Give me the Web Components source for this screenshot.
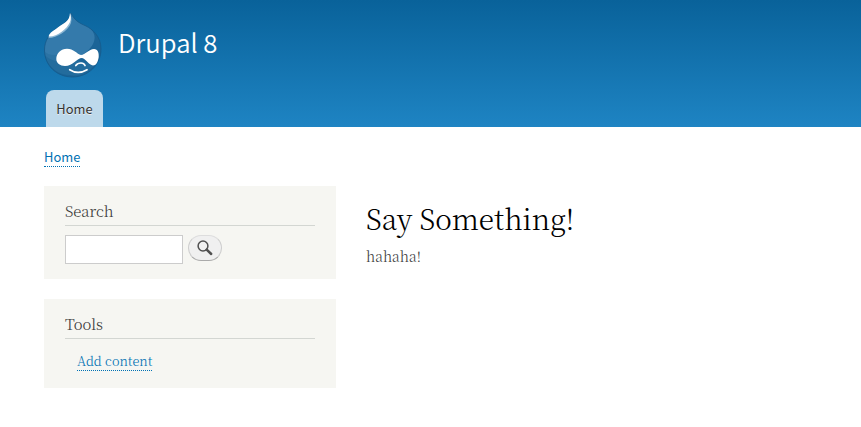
<!DOCTYPE html>
<html lang="en"><head><meta charset="utf-8"><title>Drupal 8</title>
<style>
html,body{margin:0;background:#fff;height:427px;overflow:hidden}
body{--sans:"Source Sans Pro","Noto Sans CJK SC",sans-serif;--serif:"Source Serif Pro","Noto Serif CJK SC","Liberation Serif",serif;font-family:var(--serif);color:#3b3b3b}
</style></head><body>
<drupal-page>
<site-header slot="header" name="Drupal 8"><nav-tab>Home</nav-tab></site-header>
<text-link class="crumb" slot="breadcrumb">Home</text-link>
<side-block slot="sidebar" heading="Search"><search-form></search-form></side-block>
<side-block slot="sidebar" class="tools" heading="Tools"><text-link>Add content</text-link></side-block>
<page-article slot="content" heading="Say Something!">hahaha!</page-article>
</drupal-page>
<script>
const define=(name,html)=>customElements.define(name,class extends HTMLElement{
 constructor(){super();this.attachShadow({mode:'open'}).innerHTML=html;}
 connectedCallback(){const t=this.shadowRoot.querySelector('[data-title]');if(t)t.textContent=this.getAttribute('heading')||this.getAttribute('name')||'';}
});
define('drupal-logo',`<style>:host{display:block;width:60px;height:68px}svg{display:block}</style>
<svg width="60" height="68" viewBox="0 0 60 68">
<defs><clipPath id="d"><path d="M28 1C27 9 19 12 13 17C6 22 1.500 29 1.500 38C1.500 54 14 65 29.500 65C45 65 58 53 58 37C58 24 49 17 43 14C36 11 31 8 28 1Z"/></clipPath></defs>
<g clip-path="url(#d)"><rect width="60" height="68" fill="#1b6497"/>
<path d="M28 0C38 9 48 14 51 22C55 34 38 47 23 49C13 51 5 47 1 42V10L28 0Z" fill="#347aab"/>
<path d="M1 39C8 46 16 42 25 41C37 53 47 52 54 47C49 60 37 65 26 63C11 62 3 51 1 39Z" fill="#28709f" opacity=".65"/></g>
<path d="M28 1C27 9 19 12 13 17C6 22 1.500 29 1.500 38C1.500 54 14 65 29.500 65C45 65 58 53 58 37C58 24 49 17 43 14C36 11 31 8 28 1Z" fill="none" stroke="#155b8b" stroke-width=".8"/>
<path d="M27 1C27 10 20 11 13 17C9 20 6 24 5.500 26C14 26 25 19 28 11C29 7 28 4 27 1Z" fill="#8bb7d4"/>
<path d="M27 1C27 10 20 11 13 17C9 19 6 22 5.500 24.500C14 25 24 17 27 10C28.200 7 28 4 27 1Z" fill="#fff"/>
<path d="M13.300 47C13.300 41 18 36.700 24 36.700C30.500 36.700 34 42 38 43C42 43 46 37 51 37C55 37 56 41 55.700 45C55 50 53 53.500 50 53.500C46 53 43 47 39 46C34 46 30 54 22 54C17 54 13.300 51 13.300 47Z" fill="#fff"/>
<path d="M32.800 53.500Q34.500 51 38 51Q41 51 42 53.500M26.700 57.700Q35 63 44 57.700" fill="none" stroke="#fff" stroke-width="1.700" stroke-linecap="round"/>
</svg>`);
define('nav-tab',`<style>:host{display:block;box-sizing:border-box;width:57px;height:37px;border-radius:8px 8px 0 0;background:#bdd9eb;color:#333;font:400 12.900px/38px var(--sans);text-align:center;text-shadow:0 1px #eee}</style><slot></slot>`);
define('site-header',`<style>:host{display:block;height:127px;background:linear-gradient(#09629a,#1e84c3)}header{padding:12px 0 0 43px}.brand{display:flex;height:78px}h1{margin:10px 0 0 15px;color:#fff;font:350 25.700px/40px var(--sans);white-space:nowrap}nav{display:flex;padding-left:3px}</style><header><div class="brand"><drupal-logo></drupal-logo><h1 data-title></h1></div><nav><slot></slot></nav></header>`);
define('text-link',`<style>:host{display:block;font-size:12.800px;line-height:18px}:host(.crumb){font:400 12.900px/18px var(--sans)}a{display:inline-block;color:#0071b3;border-bottom:1px dotted #0071b3}</style><a><slot></slot></a>`);
define('side-block',`<style>:host{display:block;box-sizing:border-box;width:292px;height:93px;padding:15px 21px 0;background:#f6f6f2}:host(.tools){height:89px}h2{box-sizing:border-box;height:25px;margin:0;border-bottom:1px solid #d3d6d2;font:300 14.900px/20px var(--serif)}.body{padding-top:9px}:host(.tools) .body{padding:13px 0 0 12px;font-weight:300}</style><h2 data-title></h2><div class="body"><slot></slot></div>`);
define('search-form',`<style>:host{display:flex;gap:5px}input{box-sizing:border-box;width:118px;height:29px;margin:0;padding:4px;border:1px solid #ccc;background:#fff;border-radius:0}button{box-sizing:border-box;width:34px;height:26px;padding:0;border:1px solid #ccc;border-top-color:#ddd;border-bottom-color:#aaa;border-radius:13px;background:#f0f0f0;display:flex;align-items:center;justify-content:center}svg{display:block;margin:-1px 0 0 -1px}</style><input type="text" aria-label="Search"><button aria-label="Search"><svg width="16" height="16" viewBox="0 0 16 16" fill="none" stroke="#505050"><circle cx="6" cy="6" r="4.900" stroke-width="1.500"/><path d="M9.700 9.700L14.200 14" stroke-width="2.500" stroke-linecap="round"/></svg></button>`);
define('page-article',`<style>:host{display:block}h1{margin:0;color:#000;font:300 28.050px/40px var(--serif);white-space:nowrap}p{margin:7px 0 0;font-size:14px;line-height:22px;font-weight:300}</style><h1 data-title></h1><p><slot></slot></p>`);
define('drupal-page',`<style>:host{display:block;width:861px}.crumbs{height:38px;padding:21px 0 0 44px}main{display:grid;grid-template-columns:292px 1fr;column-gap:30px;padding-left:44px}aside{display:grid;row-gap:20px;align-content:start}section{padding-top:12px}</style><slot name="header"></slot><div class="crumbs"><slot name="breadcrumb"></slot></div><main><aside><slot name="sidebar"></slot></aside><section><slot name="content"></slot></section></main>`);
</script></body></html>
